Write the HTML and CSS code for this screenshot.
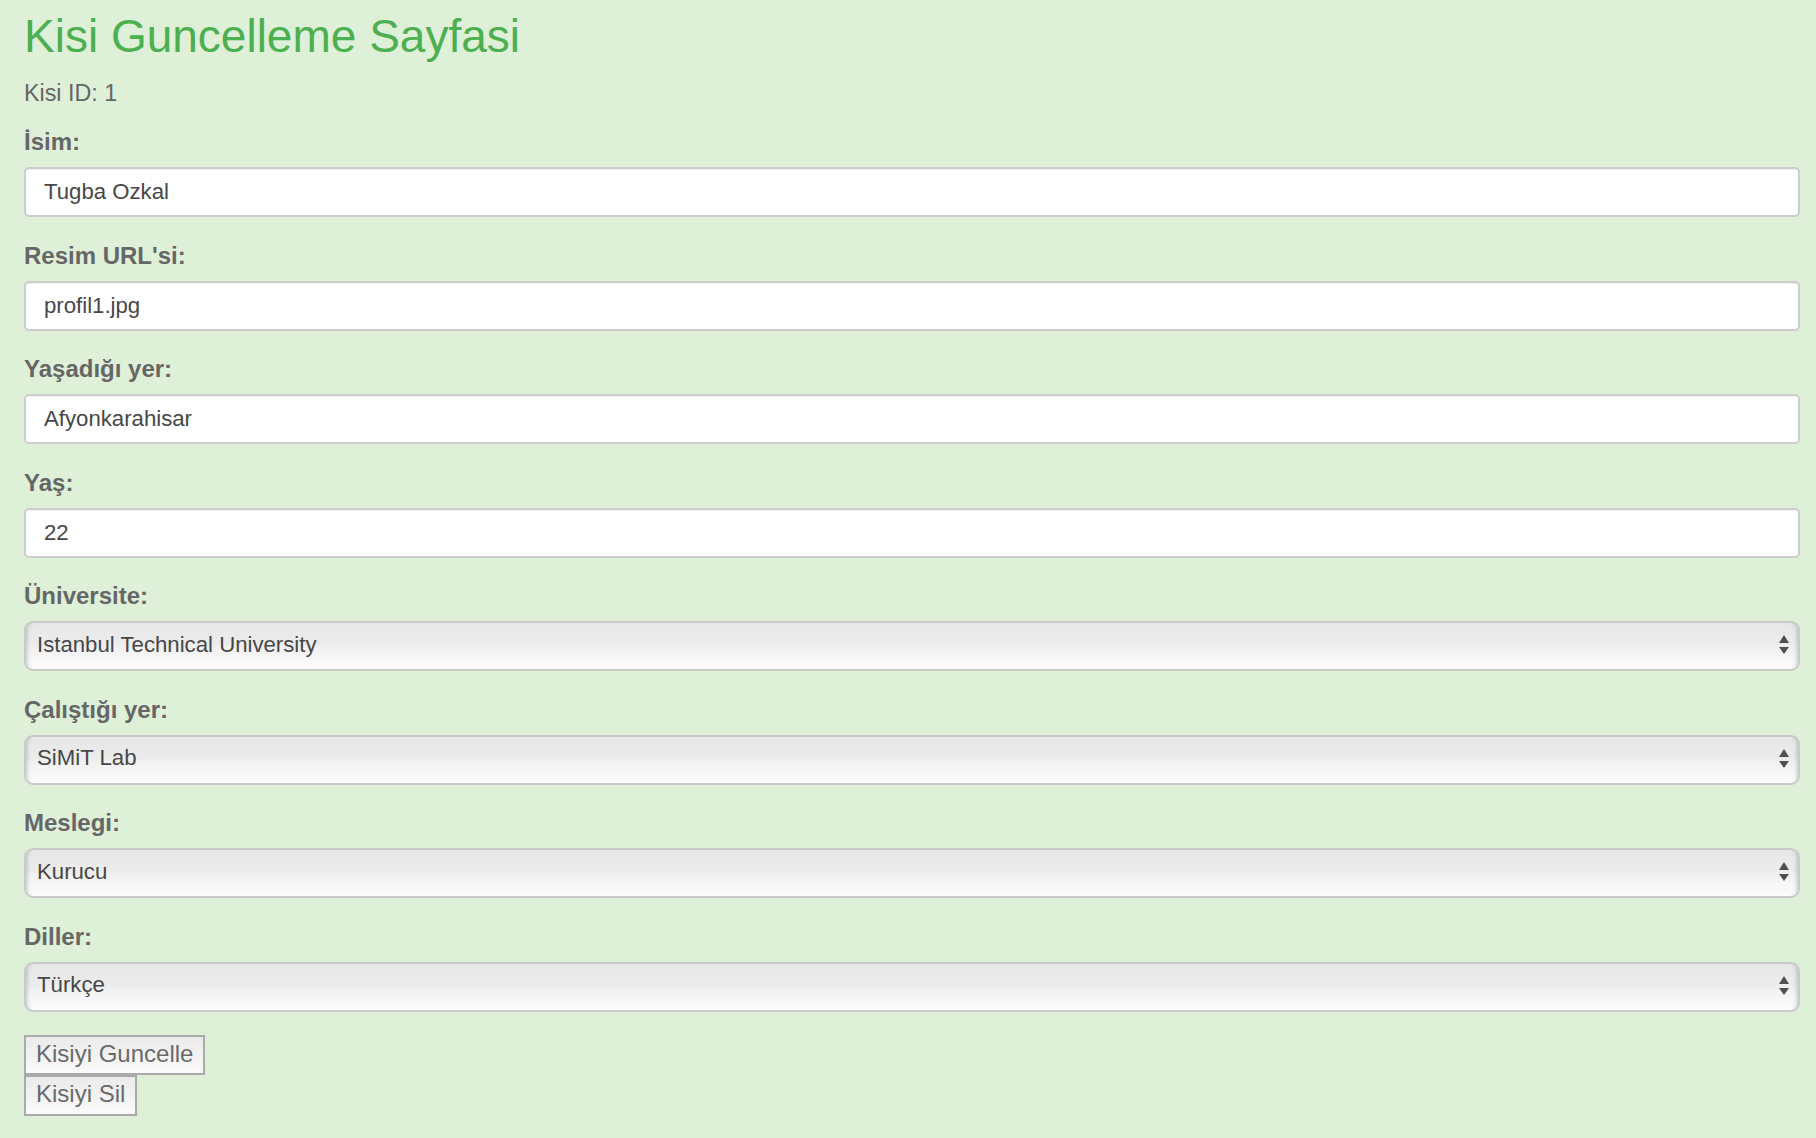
FILE: index.html
```html
<!DOCTYPE html>
<html lang="tr">
<head>
<meta charset="utf-8">
<title>Kisi Guncelleme Sayfasi</title>
<link rel="stylesheet" href="styles.css">
</head>
<body>
<div class="page">
  <h1 class="title">Kisi Guncelleme Sayfasi</h1>
  <p class="person-id">Kisi ID: 1</p>
  <form class="form">
    <div class="field">
      <label class="label">İsim:</label>
      <input class="input" type="text" value="Tugba Ozkal">
    </div>
    <div class="field">
      <label class="label">Resim URL'si:</label>
      <input class="input" type="text" value="profil1.jpg">
    </div>
    <div class="field">
      <label class="label">Yaşadığı yer:</label>
      <input class="input" type="text" value="Afyonkarahisar">
    </div>
    <div class="field">
      <label class="label">Yaş:</label>
      <input class="input" type="text" value="22">
    </div>
    <div class="field">
      <label class="label">Üniversite:</label>
      <div class="select-wrap">
        <select class="select"><option>Istanbul Technical University</option></select>
        <span class="arrows"><span class="arrow-up"></span><span class="arrow-down"></span></span>
      </div>
    </div>
    <div class="field">
      <label class="label">Çalıştığı yer:</label>
      <div class="select-wrap">
        <select class="select"><option>SiMiT Lab</option></select>
        <span class="arrows"><span class="arrow-up"></span><span class="arrow-down"></span></span>
      </div>
    </div>
    <div class="field">
      <label class="label">Meslegi:</label>
      <div class="select-wrap">
        <select class="select"><option>Kurucu</option></select>
        <span class="arrows"><span class="arrow-up"></span><span class="arrow-down"></span></span>
      </div>
    </div>
    <div class="field">
      <label class="label">Diller:</label>
      <div class="select-wrap">
        <select class="select"><option>Türkçe</option></select>
        <span class="arrows"><span class="arrow-up"></span><span class="arrow-down"></span></span>
      </div>
    </div>
    <div class="actions">
      <button class="btn" type="button">Kisiyi Guncelle</button>
      <button class="btn" type="button">Kisiyi Sil</button>
    </div>
  </form>
</div>
</body>
</html>
```

FILE: styles.css
```css
html, body {
  margin: 0;
  padding: 0;
  background: #dff0d8;
}

body {
  font-family: "Liberation Sans", Arial, Helvetica, sans-serif;
  color: #666666;
}

.page {
  padding: 11px 16px 0 24px;
}

.title {
  margin: 0;
  font-size: 46px;
  line-height: 50px;
  font-weight: normal;
  color: #4caf50;
}

.person-id {
  margin: 18px 0 0 0;
  font-size: 23.3px;
  line-height: 28px;
  color: #666666;
}

.form {
  margin: 21px 0 0 0;
}

.field + .field {
  margin-top: 24.5px;
}

.label {
  display: block;
  font-size: 24px;
  line-height: 28px;
  font-weight: bold;
  color: #666666;
  margin-bottom: 11px;
}

.input {
  display: block;
  box-sizing: border-box;
  width: 100%;
  height: 50px;
  margin: 0;
  padding: 0 17px 0 18px;
  border: 2px solid #cdcdcd;
  border-radius: 5px;
  background: #ffffff;
  box-shadow: inset 0 1px 1px rgba(0, 0, 0, 0.06);
  font-family: "Liberation Sans", Arial, Helvetica, sans-serif;
  font-size: 22.2px;
  color: #474747;
  outline: none;
}

.select-wrap {
  position: relative;
}

.select {
  display: block;
  box-sizing: border-box;
  width: 100%;
  height: 50px;
  margin: 0;
  padding: 0 40px 4px 11px;
  -webkit-appearance: none;
  appearance: none;
  border: 2px solid #cacaca;
  border-radius: 9px;
  background: linear-gradient(to bottom, #e7e7e7 0%, #ececec 46%, #f1f1f1 54%, #fdfdfd 100%);
  box-shadow: inset 5px 0 4px -4px rgba(0, 0, 0, 0.2), inset -5px 0 4px -4px rgba(0, 0, 0, 0.2);
  font-family: "Liberation Sans", Arial, Helvetica, sans-serif;
  font-size: 22.2px;
  color: #474747;
  outline: none;
}

.arrows {
  position: absolute;
  right: 11px;
  top: 14px;
  display: flex;
  flex-direction: column;
  align-items: center;
  pointer-events: none;
}

.arrow-up {
  width: 0;
  height: 0;
  border-left: 5px solid transparent;
  border-right: 5px solid transparent;
  border-bottom: 8px solid #505050;
}

.arrow-down {
  width: 0;
  height: 0;
  margin-top: 4px;
  border-left: 5px solid transparent;
  border-right: 5px solid transparent;
  border-top: 7px solid #505050;
}

.actions {
  margin-top: 23px;
  padding-bottom: 20px;
}

.btn {
  display: block;
  margin: 0;
  padding: 2px 10px 5.5px;
  border: 2px solid #aaaaaa;
  border-radius: 0;
  background: linear-gradient(to bottom, #ebebeb 0%, #f2f2f2 50%, #fbfbfb 100%);
  font-family: "Liberation Sans", Arial, Helvetica, sans-serif;
  font-size: 24px;
  line-height: 29px;
  color: #6a6a6a;
  cursor: pointer;
}
```
